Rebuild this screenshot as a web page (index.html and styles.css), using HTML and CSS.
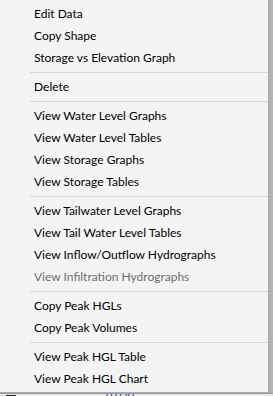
FILE: index.html
```
<!DOCTYPE html>
<html>
<head>
<meta charset="utf-8">
<link rel="stylesheet" href="styles.css">
</head>
<body>
<div class="screen">
  <div class="menu">
    <div class="item">Edit Data</div>
    <div class="item">Copy Shape</div>
    <div class="item">Storage vs Elevation Graph</div>
    <div class="sep"></div>
    <div class="item">Delete</div>
    <div class="sep"></div>
    <div class="item">View Water Level Graphs</div>
    <div class="item">View Water Level Tables</div>
    <div class="item">View Storage Graphs</div>
    <div class="item">View Storage Tables</div>
    <div class="sep"></div>
    <div class="item">View Tailwater Level Graphs</div>
    <div class="item">View Tail Water Level Tables</div>
    <div class="item">View Inflow/Outflow Hydrographs</div>
    <div class="item disabled">View Infiltration Hydrographs</div>
    <div class="sep"></div>
    <div class="item">Copy Peak HGLs</div>
    <div class="item">Copy Peak Volumes</div>
    <div class="sep"></div>
    <div class="item">View Peak HGL Table</div>
    <div class="item">View Peak HGL Chart</div>
  </div>
  <div class="under">
    <span class="mark"></span>
    <span class="val">0.020</span>
  </div>
</div>
</body>
</html>
```
FILE: styles.css
```
html, body {
  margin: 0;
  padding: 0;
  background: #ffffff;
}
.screen {
  width: 273px;
  height: 396px;
  overflow: hidden;
  font-family: Lato, "Noto Sans", "Liberation Sans", sans-serif;
  font-size: 12px;
  background: #f3f3f3;
}
.menu {
  width: 268px;
  padding: 3px 0 2px 0;
  background: #f4f4f4;
  border-right: 1px solid #a9a9a9;
  border-bottom: 1px solid #a9a9a9;
  box-shadow: 4px 0 0 #b4b4b4;
  position: relative;
  z-index: 1;
}
.item {
  height: 22px;
  line-height: 22px;
  padding-left: 34px;
  color: #000000;
  white-space: nowrap;
}
.item.disabled {
  color: #6d6d6d;
}
.sep {
  height: 1px;
  margin: 3px 0 3px 30px;
  background: #d7d7d7;
}
.under {
  height: 4px;
  border-top: 1px solid #9a9a9a;
  background: #e8e8e8;
  display: flex;
  align-items: flex-start;
  overflow: hidden;
}
.mark {
  display: block;
  width: 10px;
  height: 1px;
  margin: 1px 0 0 6px;
  background: #222222;
}
.val {
  display: block;
  margin: -4px 0 0 90px;
  color: #2b2bc8;
  font-size: 11px;
  line-height: 12px;
}
```
